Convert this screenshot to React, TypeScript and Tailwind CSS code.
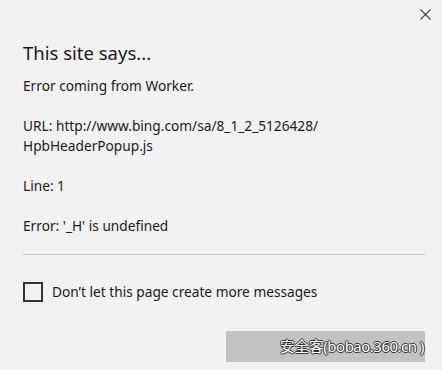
export default function App() {
  return (
    <div className="w-[442px] h-[370px] bg-[#f2f2f2] text-[#1a1a1a] relative overflow-hidden" style={{ fontFamily: '"Segoe UI", "Noto Sans", "Noto Sans CJK SC", sans-serif' }}>
      <button className="absolute right-[11px] top-[8px] w-[12px] h-[12px] flex items-center justify-center text-[#444]">
        <svg width="11" height="11" viewBox="0 0 11 11" fill="none" stroke="currentColor" strokeWidth="1.1">
          <path d="M0.5 0.5L10.5 10.5M10.5 0.5L0.5 10.5" />
        </svg>
      </button>
      <div className="pl-[23px] pr-[17px] pt-[40px]">
        <h1 className="text-[18.5px] leading-[26px] font-normal">This site says...</h1>
        <div className="mt-[10px] text-[13.7px] leading-[20px]">
          <p>Error coming from Worker.</p>
          <p className="mt-[20px]">URL: http://www.bing.com/sa/8_1_2_5126428/<br />HpbHeaderPopup.js</p>
          <p className="mt-[20px]">Line: 1</p>
          <p className="mt-[20px]">Error: '_H' is undefined</p>
        </div>
        <div className="mt-[18px] h-px bg-[#c6c6c6]" />
        <label className="mt-[27px] flex items-center gap-[9px] text-[13.7px] leading-[20px]">
          <span className="w-[20px] h-[20px] border-2 border-[#333] shrink-0" />
          <span>Don’t let this page create more messages</span>
        </label>
        <div className="mt-[29px] flex justify-end">
          <div className="w-[199px] h-[31px] bg-[#c2c2c2] flex items-center justify-end pr-[1px] text-[15px] text-white tracking-[-0.5px]" style={{ textShadow: '1px 0 0 #333, -1px 0 0 #333, 0 1px 0 #333, 0 -1px 0 #333' }}>
            安全客(bobao.360.cn )
          </div>
        </div>
      </div>
    </div>
  )
}
